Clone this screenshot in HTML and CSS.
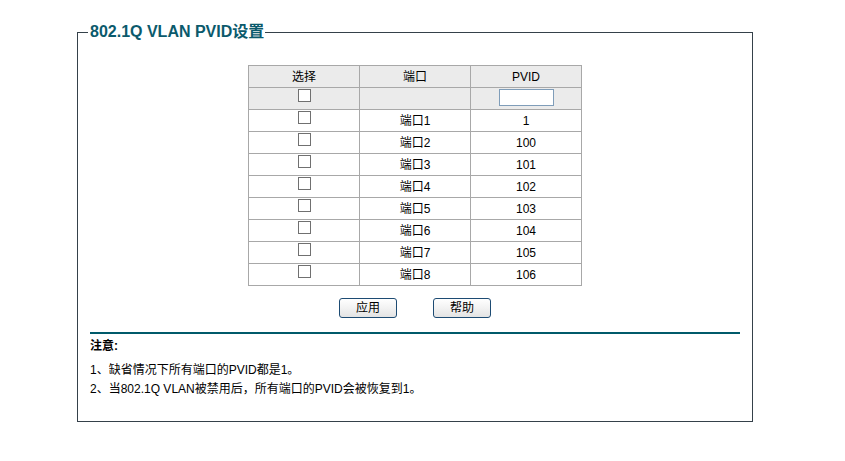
FILE: index.html
```html
<!DOCTYPE html>
<html lang="zh-CN">
<head>
<meta charset="utf-8">
<title>802.1Q VLAN PVID设置</title>
<link rel="stylesheet" href="styles.css">
</head>
<body>
<fieldset class="panel">
  <legend class="panel-title">802.1Q VLAN PVID设置</legend>
  <table class="grid">
    <tr class="head">
      <td>选择</td>
      <td>端口</td>
      <td>PVID</td>
    </tr>
    <tr class="filter">
      <td class="ctl"><input type="checkbox" class="chk"></td>
      <td></td>
      <td class="ctl"><input type="text" class="txt"></td>
    </tr>
    <tr><td class="ctl"><input type="checkbox" class="chk"></td><td>端口1</td><td>1</td></tr>
    <tr><td class="ctl"><input type="checkbox" class="chk"></td><td>端口2</td><td>100</td></tr>
    <tr><td class="ctl"><input type="checkbox" class="chk"></td><td>端口3</td><td>101</td></tr>
    <tr><td class="ctl"><input type="checkbox" class="chk"></td><td>端口4</td><td>102</td></tr>
    <tr><td class="ctl"><input type="checkbox" class="chk"></td><td>端口5</td><td>103</td></tr>
    <tr><td class="ctl"><input type="checkbox" class="chk"></td><td>端口6</td><td>104</td></tr>
    <tr><td class="ctl"><input type="checkbox" class="chk"></td><td>端口7</td><td>105</td></tr>
    <tr><td class="ctl"><input type="checkbox" class="chk"></td><td>端口8</td><td>106</td></tr>
  </table>
  <div class="actions">
    <button type="button" class="btn">应用</button>
    <button type="button" class="btn">帮助</button>
  </div>
  <div class="notes">
    <div class="notes-title">注意:</div>
    <div class="notes-line">1、缺省情况下所有端口的PVID都是1。</div>
    <div class="notes-line">2、当802.1Q VLAN被禁用后，所有端口的PVID会被恢复到1。</div>
  </div>
</fieldset>
</body>
</html>
```
FILE: styles.css
```css
html, body {
  margin: 0;
  padding: 0;
  background: #ffffff;
}
body {
  font-family: "Liberation Sans", "Noto Sans CJK SC", sans-serif;
  font-size: 12px;
  color: #000000;
}
.panel {
  box-sizing: border-box;
  width: 676px;
  margin: 22px 0 0 77px;
  padding: 23px 12px 22px 12px;
  border: 1px solid #35414a;
  min-width: 0;
}
.panel-title {
  margin-left: -2px;
  padding: 0 1px 0 2px;
  font-size: 16px;
  line-height: 20px;
  font-weight: bold;
  color: #0b5a6c;
}
.grid {
  border-collapse: collapse;
  margin: 0 auto;
  width: 334px;
  table-layout: fixed;
}
.grid td {
  border: 1px solid #a8a8a8;
  height: 21px;
  padding: 0;
  text-align: center;
  vertical-align: middle;
  line-height: 14px;
  width: 110px;
}
.grid tr.head td,
.grid tr.filter td {
  background: #ebebeb;
}
.grid td.ctl {
  vertical-align: top;
}
.chk {
  -webkit-appearance: none;
  appearance: none;
  display: block;
  box-sizing: border-box;
  width: 13px;
  height: 13px;
  margin: 1px auto 0;
  border: 1px solid #707070;
  background: #ffffff;
  border-radius: 0;
}
.txt {
  display: block;
  box-sizing: border-box;
  width: 55px;
  height: 17px;
  margin: 1px auto 0;
  padding: 0 2px;
  border: 1px solid #7f9db9;
  background: #ffffff;
  font: inherit;
  border-radius: 0;
}
.actions {
  display: flex;
  justify-content: center;
  gap: 36px;
  margin-top: 12px;
}
.btn {
  box-sizing: border-box;
  width: 58px;
  height: 20px;
  padding: 0;
  border: 1px solid #1d4b73;
  border-radius: 3px;
  background: linear-gradient(#ffffff, #f2f2f2 50%, #e3e3e3);
  font-family: "Liberation Sans", "Noto Sans CJK SC", sans-serif;
  font-size: 12px;
  line-height: 18px;
  color: #000000;
}
.notes {
  margin-top: 14px;
  border-top: 2px solid #005a6a;
}
.notes-title {
  margin-top: 2px;
  line-height: 20px;
  font-weight: bold;
}
.notes-line {
  line-height: 19px;
}
.notes-title + .notes-line {
  margin-top: 5px;
}
```
